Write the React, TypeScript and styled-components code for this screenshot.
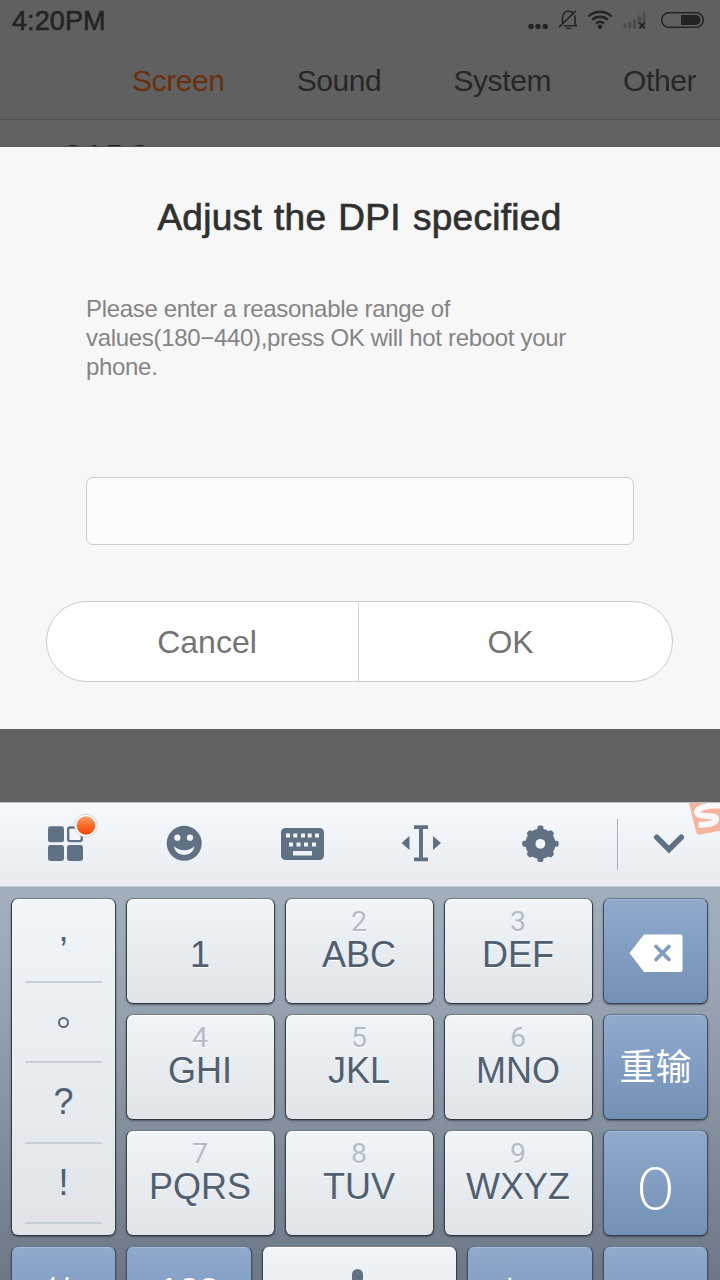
import React from "react";
import styled, { createGlobalStyle } from "styled-components";

const GlobalStyle = createGlobalStyle`
  * { box-sizing: border-box; }
  body { margin: 0; background: #626262; font-family: "Liberation Sans", "Noto Sans CJK SC", sans-serif; }
`;

const Screen = styled.div`
  width: 720px;
  height: 1280px;
  display: flex;
  flex-direction: column;
  overflow: hidden;
  background: #626262;
`;

const Header = styled.header`
  flex: none;
  height: 120px;
  background: #606060;
  border-bottom: 1px solid #505050;
`;

const StatusBar = styled.div`
  height: 42px;
  padding: 0 15px 0 12px;
  display: flex;
  justify-content: space-between;
  color: #232323;
`;

const Clock = styled.span`
  font-size: 27px;
  line-height: 42px;
  letter-spacing: 0.1px;
  -webkit-text-stroke: 0.6px #232323;
`;

const StatusIcons = styled.svg`
  width: 180px;
  height: 42px;
`;

const Tabs = styled.nav`
  height: 77px;
  padding-left: 132px;
  display: flex;
  gap: 72px;
`;

const Tab = styled.span<{ $active?: boolean }>`
  font-size: 30px;
  line-height: 78px;
  letter-spacing: -0.4px;
  color: ${(p) => (p.$active ? "#6c2e0c" : "#272727")};
`;

const HiddenRow = styled.div`
  flex: none;
  height: 27px;
  padding: 18px 0 0 60px;
  overflow: hidden;
  border-bottom: 1px solid #555;
  font-size: 32.5px;
  line-height: 38px;
  color: #181818;
`;

const Dialog = styled.section`
  flex: none;
  height: 582px;
  padding: 50px 47px 0 46px;
  background: #f7f7f7;
`;

const Title = styled.h1`
  margin: 0;
  font-size: 37px;
  font-weight: 400;
  line-height: 42px;
  letter-spacing: 0.3px;
  word-spacing: 1.4px;
  text-align: center;
  white-space: nowrap;
  color: #303030;
  -webkit-text-stroke: 0.7px #303030;
`;

const Message = styled.p`
  margin: 55px 40px 0;
  height: 88px;
  font-size: 24px;
  line-height: 29px;
  letter-spacing: -0.32px;
  white-space: pre;
  color: #858585;
`;

const Field = styled.input`
  display: block;
  width: 548px;
  height: 68px;
  margin: 95px 0 0 40px;
  border: 1px solid #ccc;
  border-radius: 7px;
  background: #fcfcfc;
  outline: none;
`;

const Actions = styled.div`
  display: flex;
  height: 81px;
  margin-top: 56px;
  border: 1px solid #ccc;
  border-radius: 41px;
  background: #fff;
  overflow: hidden;
`;

const Action = styled.button`
  width: 311px;
  padding: 0 0 0 9px;
  border: 0;
  background: none;
  font: 32px/78px "Liberation Sans", sans-serif;
  color: #747474;
  & + & {
    padding-left: 0;
    padding-right: 10px;
    width: 314px;
    border-left: 1px solid #d4d4d4;
  }
`;

const Backdrop = styled.div`
  flex: none;
  height: 73px;
`;

const Toolbar = styled.div`
  flex: none;
  height: 84px;
  border-top: 1px solid #b9c3cc;
  background: linear-gradient(#f6f9fc, #e8ecf1);
  svg { display: block; }
`;

const Keyboard = styled.div`
  flex: none;
  display: flex;
  flex-direction: column;
  gap: 10px;
  height: 394px;
  padding: 11px 12px 0 11px;
  border-top: 1px solid #c3ccd5;
  background: linear-gradient(#a2b0bd, #96a1af 33%, #6d7887);
  overflow: hidden;
`;

const KeyGrid = styled.div`
  flex: none;
  display: grid;
  grid-template-columns: 105px repeat(3, 149px) 105px;
  grid-template-rows: repeat(3, 106px);
  gap: 10px;
`;

const BottomRow = styled.div`
  flex: none;
  display: grid;
  grid-template-columns: 105px 126px 195px 126px 105px;
  grid-template-rows: 106px;
  gap: 10px;
`;

const Key = styled.button<{ $blue?: boolean }>`
  display: flex;
  flex-direction: column;
  align-items: center;
  min-width: 0;
  padding: 11px ${(p) => (p.$blue ? 0 : 1)}px 0 0;
  border: 1px solid;
  border-color: ${(p) => (p.$blue ? "#667a94 #3e4d60 #303c4b" : "#777d84 #393f47 #30353b")};
  border-radius: 7px;
  background: ${(p) => (p.$blue ? "linear-gradient(#8faacd, #7390b6)" : "linear-gradient(#f0f5f9, #e0e4e9)")};
  box-shadow: 0 1px 2px rgba(30, 36, 44, 0.5),
    inset 0 1px 1px ${(p) => (p.$blue ? "rgba(255,255,255,0.2)" : "#fff")};
  font-family: "Liberation Sans", sans-serif;
  overflow: hidden;
`;

const Digit = styled.span`
  font: 28.5px/24px Roboto, sans-serif;
  color: #b4bcc7;
  text-shadow: 0 1px 0 #fff;
`;

const Letters = styled.span`
  margin-top: 1px;
  font-size: 36px;
  line-height: 40px;
  color: #516071;
  text-shadow: 0 1px 0 #fff;
`;

const OneLabel = styled(Letters)`
  margin-top: 25px;
`;

const Punctuation = styled.div`
  grid-row: 1 / 4;
  display: flex;
  flex-direction: column;
  padding: 3px 13px 1px;
  border: 1px solid;
  border-color: #777d84 #393f47 #30353b;
  border-radius: 7px;
  background: linear-gradient(#f0f5f9, #e0e4e9);
  box-shadow: 0 1px 2px rgba(30, 36, 44, 0.5), inset 0 1px 1px #fff;
`;

const Mark = styled.div<{ $line?: number; $top?: number }>`
  height: 80.6px;
  padding-top: ${(p) => p.$top ?? 0}px;
  border-bottom: 2px solid #c6d0da;
  text-align: center;
  font-size: 36px;
  line-height: ${(p) => p.$line ?? 78}px;
  color: #516071;
`;

const Ring = styled.span`
  display: block;
  width: 11px;
  height: 11px;
  margin: 0 auto;
  border: 2px solid #5b6979;
  border-radius: 50%;
`;

const BlueLabel = styled.span<{ $top: number }>`
  margin-top: ${(p) => p.$top}px;
  font: 36px/1.2 "Noto Sans CJK SC", sans-serif;
  white-space: nowrap;
  color: #fff;
`;

const NumberLabel = styled(BlueLabel)`
  font-family: "Liberation Sans", sans-serif;
`;

const LanguageLabel = styled(BlueLabel)`
  padding-right: 10px;
  font-size: 30px;
  small { font-size: 22px; }
`;

const Zero = styled.span`
  margin-top: 15px;
  font: 300 61px/60px Lato, sans-serif;
  color: #fff;
`;

const letterKeys = [
  { digit: "2", letters: "ABC" },
  { digit: "3", letters: "DEF" },
  { digit: "4", letters: "GHI" },
  { digit: "5", letters: "JKL" },
  { digit: "6", letters: "MNO" },
  { digit: "7", letters: "PQRS" },
  { digit: "8", letters: "TUV" },
  { digit: "9", letters: "WXYZ" },
];

function LetterKey({ index }: { index: number }) {
  const k = letterKeys[index];
  return (
    <Key>
      <Digit>{k.digit}</Digit>
      <Letters>{k.letters}</Letters>
    </Key>
  );
}

function StatusGlyphs() {
  return (
    <StatusIcons viewBox="525 0 180 42" fill="none" stroke="#232323">
      <g fill="#232323" stroke="none">
        <circle cx="531" cy="26.5" r="2.7" />
        <circle cx="538" cy="26.5" r="2.7" />
        <circle cx="545.3" cy="26.5" r="2.7" />
      </g>
      <path d="M562.5 23v-5c0-4 2.3-6.7 5.8-6.7 2 0 3.6.6 4.6 1.8M575 15.5V23l1.3 2.8h-12.5M559 27.2l17-16.4" strokeWidth="1.6" />
      <path d="M565.2 27.7h6.4c-1 2.2-5.4 2.2-6.4 0z" fill="#232323" stroke="none" />
      <path d="M588.5 16.3c6.4-6 16.6-6 23 0M592.2 19.9c4.4-4.1 11.2-4.1 15.6 0M595.9 23.5c2.4-2.3 5.8-2.3 8.2 0" strokeWidth="2.4" />
      <circle cx="600" cy="26.7" r="2.2" fill="#232323" stroke="none" />
      <path d="M625 24.2V27M629.8 22.8V27M634.5 20.5V27M639.3 16.5V23M644 12.8V22" stroke="#4c4c4c" strokeWidth="3" strokeLinecap="round" />
      <path d="M639.3 22.8l5.5 5.4M644.8 22.8l-5.5 5.4" strokeWidth="2" />
      <rect x="661.7" y="12.7" width="41.6" height="14.6" rx="7.3" strokeWidth="1.5" />
      <path d="M681 15h14.5a5 5 0 0 1 0 10H681z" fill="#232323" stroke="none" />
    </StatusIcons>
  );
}

function ToolbarGlyphs() {
  const teeth = [0, 45, 90, 135, 180, 225, 270, 315];
  return (
    <svg width="720" height="83" viewBox="0 803 720 83" fill="#607184">
      <defs>
        <linearGradient id="dot" x1="0" y1="0" x2="0" y2="1">
          <stop offset="0" stopColor="#f7a36b" />
          <stop offset="0.5" stopColor="#fa6a2b" />
          <stop offset="1" stopColor="#f34508" />
        </linearGradient>
      </defs>
      <rect x="48" y="826.3" width="16" height="16" rx="2.4" />
      <rect x="48" y="845" width="16" height="16" rx="2.4" />
      <rect x="67" y="845" width="16" height="16" rx="2.4" />
      <rect x="68.2" y="827.5" width="13.6" height="13.6" rx="2" fill="#f3f6fa" stroke="#607184" strokeWidth="2.4" />
      <circle cx="86" cy="825.5" r="11.4" fill="#fff" stroke="#d0d3d7" strokeWidth="1" />
      <circle cx="86" cy="825.5" r="9.3" fill="url(#dot)" />

      <circle cx="184.2" cy="843.3" r="17.5" />
      <circle cx="177.4" cy="837.7" r="3.1" fill="#f1f4f8" />
      <circle cx="190" cy="837.7" r="3.1" fill="#f1f4f8" />
      <path d="M174 846.3c5.6 5.4 14.8 5.4 20.400 0-1.5 11.5-18.900 11.500-20.400 0z" fill="#f1f4f8" />

      <rect x="281" y="828" width="43" height="32" rx="4.5" />
      <path d="M286 835.5h4M293.3 835.5h4M301 835.5h4M307.7 835.5h4M315 835.5h4M289 844.5h4M296.5 844.5h4M304 844.5h4M312 844.5h4" stroke="#f1f4f8" strokeWidth="4" />
      <rect x="293" y="851" width="19" height="4.5" fill="#eef1f5" />

      <path d="M414 825.3h14v3.7h-5v28.500h5v3.700h-14v-3.700h5V829h-5z" />
      <path d="M409.5 836v14l-8-7zM433 836v14l8-7z" />

      <g transform="translate(540.4 843.8)">
        <circle r="15" />
        {teeth.map((a) => (
          <rect key={a} x="-3" y={a % 90 ? -17.3 : -18.2} width="6" height="7" rx="2" transform={`rotate(${a})`} />
        ))}
        <circle r="4.9" fill="#f1f4f8" />
      </g>

      <path d="M617.5 819v51" stroke="#a5b1bf" />
      <path d="M656.7 837.2l12.3 12.3 12.3-12.3" fill="none" stroke="#607184" strokeWidth="5.5" strokeLinecap="round" />
      <path d="M689 803h31v27.8l-19.5 3.700q-3.700.7-4.500-3z" fill="#f5b49e" />
      <path d="M725 806C708 804 696.500 808 697 812.500c.8 5 17.500 2 19 5.500 1.500 5-8 7.300-17.500 6.500" fill="none" stroke="#f8f8fa" strokeWidth="6" />
    </svg>
  );
}

export default function App() {
  return (
    <Screen>
      <GlobalStyle />
      <Header>
        <StatusBar>
          <Clock>4:20PM</Clock>
          <StatusGlyphs />
        </StatusBar>
        <Tabs>
          <Tab $active>Screen</Tab>
          <Tab>Sound</Tab>
          <Tab>System</Tab>
          <Tab>Other</Tab>
        </Tabs>
      </Header>
      <HiddenRow>CABC</HiddenRow>
      <Dialog>
        <Title>Adjust the DPI specified</Title>
        <Message>{"Please enter a reasonable range of\nvalues(180−440),press OK will hot reboot your\nphone."}</Message>
        <Field />
        <Actions>
          <Action>Cancel</Action>
          <Action>OK</Action>
        </Actions>
      </Dialog>
      <Backdrop />
      <Toolbar>
        <ToolbarGlyphs />
      </Toolbar>
      <Keyboard>
        <KeyGrid>
          <Punctuation>
            <Mark $line={54}>,</Mark>
            <Mark $top={34}><Ring /></Mark>
            <Mark>?</Mark>
            <Mark>!</Mark>
          </Punctuation>
          <Key><OneLabel>1</OneLabel></Key>
          <LetterKey index={0} />
          <LetterKey index={1} />
          <Key $blue>
            <svg width="56" height="84" viewBox="627.5 910 56 84">
              <path d="M629 953l14.5-18.500H680q2 0 2 2V970q0 2-2 2h-36.500z" fill="#fff" />
              <path d="M655.5 946.5l13 13M668.5 946.5l-13 13" stroke="#7f9bc1" strokeWidth="3.6" strokeLinecap="round" />
            </svg>
          </Key>
          <LetterKey index={2} />
          <LetterKey index={3} />
          <LetterKey index={4} />
          <Key $blue><BlueLabel $top={17}>重输</BlueLabel></Key>
          <LetterKey index={5} />
          <LetterKey index={6} />
          <LetterKey index={7} />
          <Key $blue><Zero>0</Zero></Key>
        </KeyGrid>
        <BottomRow>
          <Key $blue><BlueLabel $top={13}>符</BlueLabel></Key>
          <Key $blue><NumberLabel $top={12}>123</NumberLabel></Key>
          <Key>
            <svg width="40" height="80" viewBox="1.5 0 40 80">
              <rect x="14.5" y="11" width="11" height="30" rx="5.5" fill="#607184" />
            </svg>
          </Key>
          <Key $blue><LanguageLabel $top={14}>中<small>/英</small></LanguageLabel></Key>
          <Key $blue />
        </BottomRow>
      </Keyboard>
    </Screen>
  );
}
